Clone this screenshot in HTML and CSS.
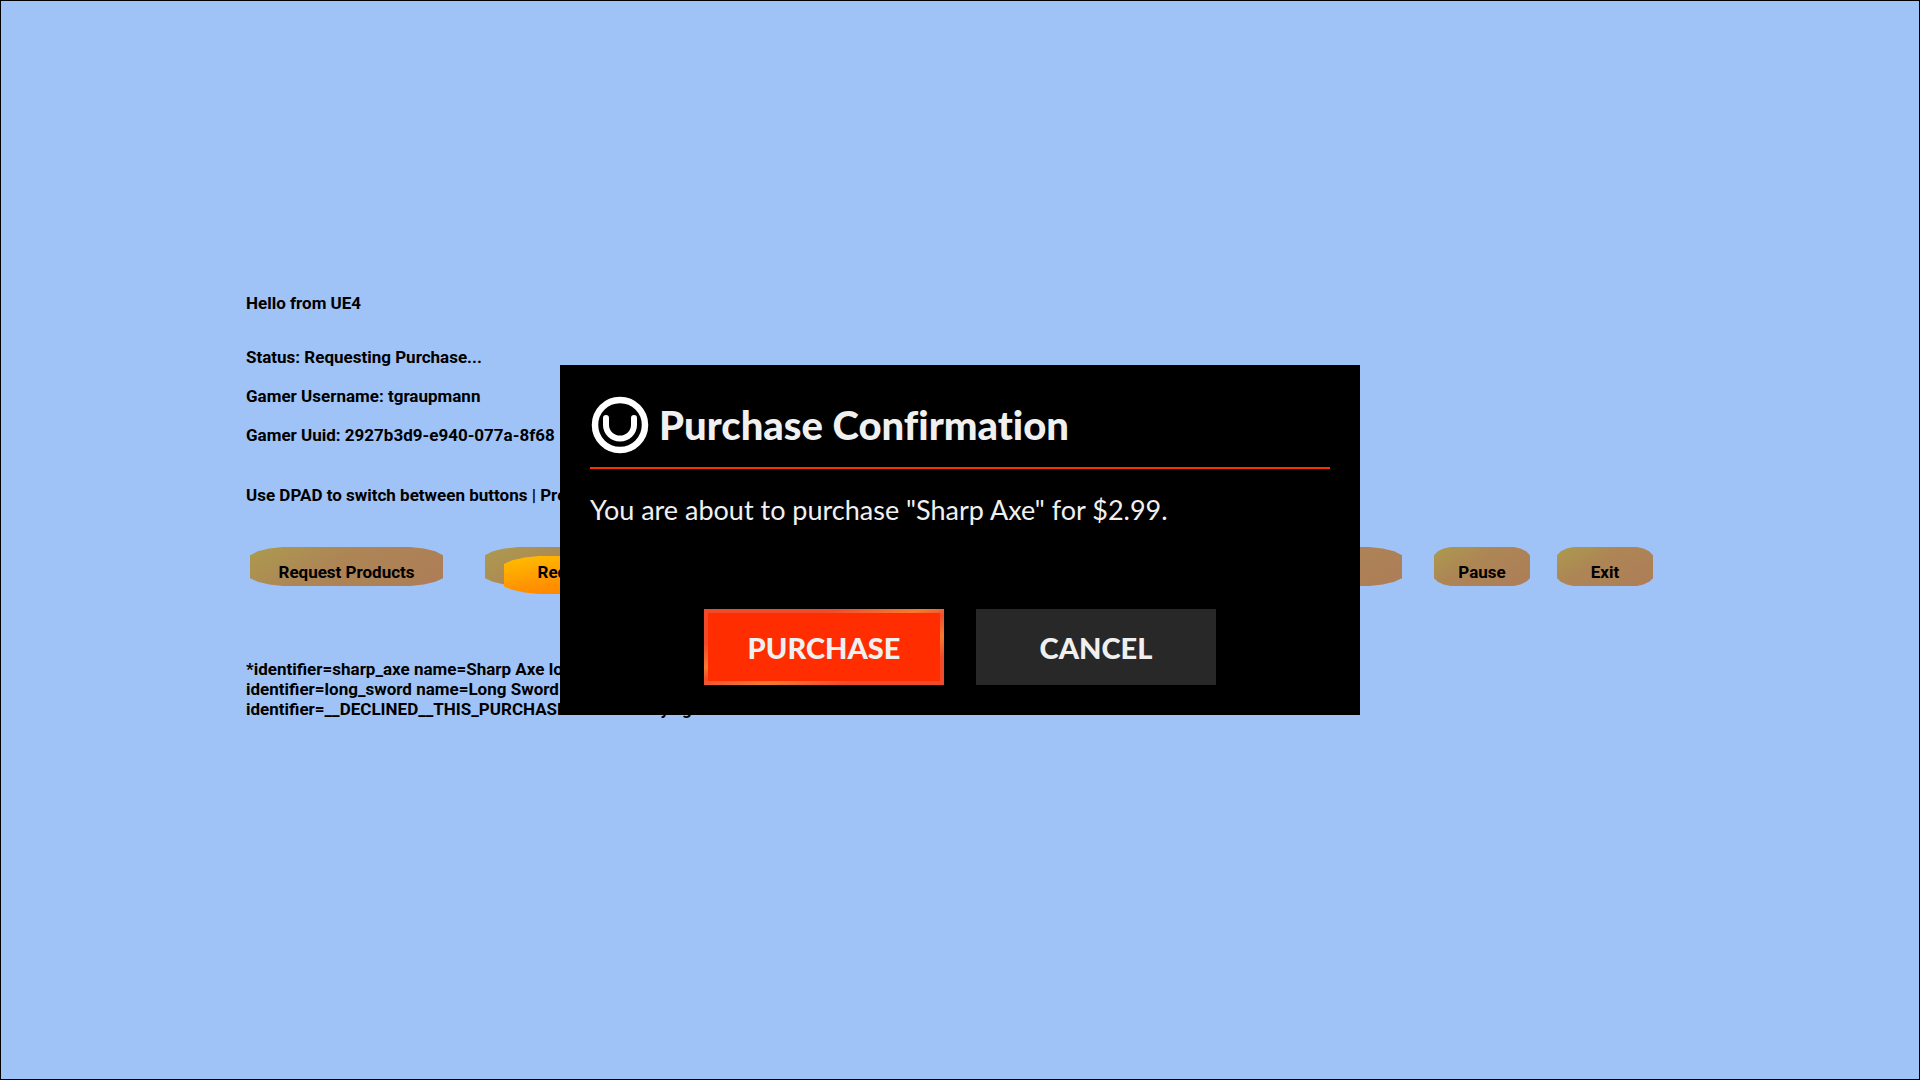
FILE: index.html
```html
<!DOCTYPE html>
<html lang="en">
<head>
<meta charset="utf-8">
<title>Purchase Confirmation</title>
<link rel="stylesheet" href="styles.css">
</head>
<body>
<main class="game">
  <h1 class="line hello">Hello from UE4</h1>
  <div class="info">
    <p class="line">Status: Requesting Purchase...</p>
    <p class="line">Gamer Username: tgraupmann</p>
    <p class="line">Gamer Uuid: 2927b3d9-e940-077a-8f68</p>
  </div>
  <p class="line hint">Use DPAD to switch between buttons | Press</p>
  <div class="toolbar">
    <button type="button" class="pill wide">Request Products</button>
    <button type="button" class="pill wide focused"><span class="highlight">Request Purchase</span></button>
    <button type="button" class="pill wide last" aria-label="More"></button>
    <div class="pair">
      <button type="button" class="pill">Pause</button>
      <button type="button" class="pill">Exit</button>
    </div>
  </div>
  <ul class="products">
    <li>*identifier=sharp_axe name=Sharp Axe localPrice=2.99</li>
    <li>identifier=long_sword name=Long Sword localPrice=4.99</li>
    <li>identifier=__DECLINED__THIS_PURCHASE name=Always gets declined localPrice=0.99</li>
  </ul>
</main>
<div class="overlay">
  <section class="dialog" role="dialog" aria-modal="true" aria-labelledby="dialog-title">
    <header class="dialog-head">
      <svg class="logo" viewBox="0 0 58 58" aria-hidden="true">
        <circle cx="29" cy="29" r="25" fill="none" stroke="#fff" stroke-width="6.500"/>
        <path d="M15 22v7a14 13.500 0 0 0 28 0v-7" fill="none" stroke="#fff" stroke-width="6" stroke-linecap="round"/>
      </svg>
      <h2 id="dialog-title">Purchase Confirmation</h2>
    </header>
    <p class="message">You are about to purchase "Sharp Axe" for $2.99.</p>
    <div class="actions">
      <button type="button" class="action primary">PURCHASE</button>
      <button type="button" class="action">CANCEL</button>
    </div>
  </section>
</div>
</body>
</html>
```
FILE: styles.css
```css
* { box-sizing: border-box; }
body {
  margin: 0;
  min-height: 100vh;
  background: #9fc2f7;
  border: 1px solid #000;
  color: #000;
  font-family: Roboto, sans-serif;
}
h1, h2, p, ul { margin: 0; padding: 0; }
button { font: inherit; color: inherit; border: 0; padding: 0; background: none; }

.game { padding: 292px 266px 0 245px; font-size: 17px; font-weight: 700; line-height: 20px; }
.line { font-size: 17px; font-weight: 700; white-space: nowrap; }
.hello { margin-bottom: 34px; }
.info { display: flex; flex-direction: column; gap: 19px; margin-bottom: 40px; }
.hint { margin-bottom: 42px; }

.toolbar { display: flex; gap: 32px; padding-left: 4px; margin-bottom: 73px; }
.pair { display: flex; gap: 27px; }
.pill {
  position: relative;
  isolation: isolate;
  width: 96px;
  height: 39px;
  padding-top: 10px;
}
.pill::before,
.highlight::before {
  content: "";
  position: absolute;
  inset: 0;
  z-index: -1;
  background: linear-gradient(150deg, #ac9b4e 0%, #ad8655 40%, #ad7d58 100%);
  clip-path: polygon(0 21%, 4% 11%, 10% 4%, 17% 0, 83% 0, 90% 4%, 96% 11%, 100% 21%, 100% 80%, 96% 89%, 90% 96%, 83% 100%, 17% 100%, 10% 96%, 4% 89%, 0 80%);
}
.wide { width: 193px; }
.focused { margin-left: 10px; }
.highlight {
  position: absolute;
  isolation: isolate;
  left: 19px;
  top: 9px;
  width: 206px;
  height: 38px;
  padding-top: 6px;
}
.highlight::before { background: linear-gradient(170deg, #ffc000, #ff9000 50%, #ff7800); }
.last { margin-left: auto; }

.products { list-style: none; white-space: nowrap; }

.overlay { position: fixed; inset: 0; display: flex; align-items: center; justify-content: center; }
.dialog {
  width: 800px;
  max-width: 100%;
  padding: 30px;
  background: #000;
  color: #f0f0f0;
  font-family: Lato, sans-serif;
  font-variant-ligatures: none;
}
.dialog-head {
  display: flex;
  align-items: center;
  gap: 10px;
  height: 74px;
  padding: 0 0 12px 1px;
  border-bottom: 2px solid #ff2d00;
}
.logo { width: 58px; height: 58px; flex: none; }
.dialog-head h2 { font-size: 40px; line-height: 48px; font-weight: 900; }
.message { margin: 25px 0 73px; font-size: 27px; line-height: 32px; }
.actions { display: flex; justify-content: center; gap: 32px; padding-top: 10px; }
.action { width: 240px; height: 76px; background: #282828; font-size: 29px; font-weight: 900; }
.primary {
  border: 4px solid;
  border-image: linear-gradient(165deg, #f04a2c 25%, #f57a32 42%, #f04e2e 50%, #f57a32 65%, #f04a2c 80%) 4;
  background: #ff2d00;
}
```
